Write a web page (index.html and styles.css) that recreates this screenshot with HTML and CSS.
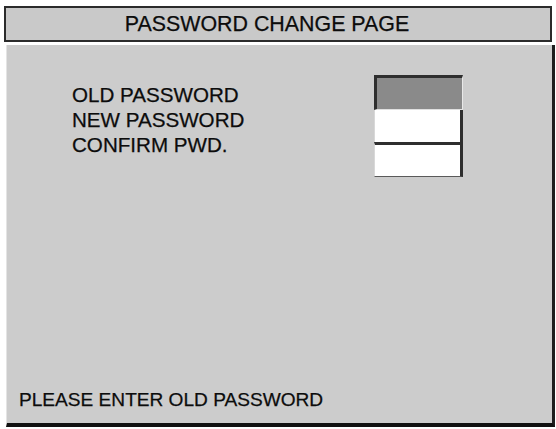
FILE: index.html
```html
<!DOCTYPE html>
<html>
<head>
<meta charset="utf-8">
<link rel="stylesheet" href="styles.css">
</head>
<body>
<div class="screen">
  <div class="title">PASSWORD CHANGE PAGE</div>
  <div class="panel">
    <div class="form">
      <div class="labels">
        <div class="label">OLD PASSWORD</div>
        <div class="label">NEW PASSWORD</div>
        <div class="label">CONFIRM PWD.</div>
      </div>
      <div class="boxes">
        <div class="box box-old"></div>
        <div class="box box-new"></div>
        <div class="box box-confirm"></div>
      </div>
    </div>
    <div class="status">PLEASE ENTER OLD PASSWORD</div>
  </div>
</div>
</body>
</html>
```

FILE: styles.css
```css
html, body {
  margin: 0;
  padding: 0;
  background: #ffffff;
}
body {
  width: 556px;
  height: 429px;
  overflow: hidden;
  font-family: "Liberation Sans", Arial, sans-serif;
  color: #0c0c0c;
  -webkit-text-stroke: 0.25px #0c0c0c;
}
.screen {
  display: flex;
  flex-direction: column;
  padding: 6px 1px 2px 4px;
  height: 429px;
  box-sizing: border-box;
}
.title {
  height: 32px;
  margin-right: 3px;
  padding-right: 22px;
  border: 2px solid #2b2b2b;
  background: #c9c9c9;
  text-align: center;
  font-size: 21.4px;
  line-height: 32px;
}
.panel {
  flex: 1;
  margin-top: 3px;
  margin-left: 2px;
  display: flex;
  flex-direction: column;
  background: #cccccc;
  border-right: 3px solid #1e1e1e;
  border-bottom: 4px solid #111111;
  border-left: 1px solid #e4e4e4;
}
.form {
  display: flex;
  padding-left: 65px;
}
.labels {
  padding-top: 37px;
  width: 302px;
}
.label {
  font-size: 20.6px;
  line-height: 25px;
  white-space: nowrap;
}
.boxes {
  padding-top: 30px;
  display: flex;
  flex-direction: column;
  width: 89px;
}
.box {
  box-sizing: border-box;
}
.box-old {
  height: 35px;
  background: #8a8a8a;
  border-top: 3px solid #2e2e2e;
  border-left: 3px solid #2e2e2e;
  border-right: 1px solid #e8e8e8;
  border-bottom: 1px solid #e0e0e0;
}
.box-new {
  height: 32px;
  background: #ffffff;
  border-left: 1px solid #d8d8d8;
  border-right: 3px solid #2e2e2e;
}
.box-confirm {
  height: 35px;
  background: #ffffff;
  border-top: 3px solid #2e2e2e;
  border-right: 3px solid #2e2e2e;
  border-left: 1px solid #d8d8d8;
  border-bottom: 1px solid #5a5a5a;
}
.status {
  margin-top: auto;
  padding: 0 0 11px 12px;
  font-size: 19.1px;
  line-height: 24px;
  white-space: nowrap;
}
```
